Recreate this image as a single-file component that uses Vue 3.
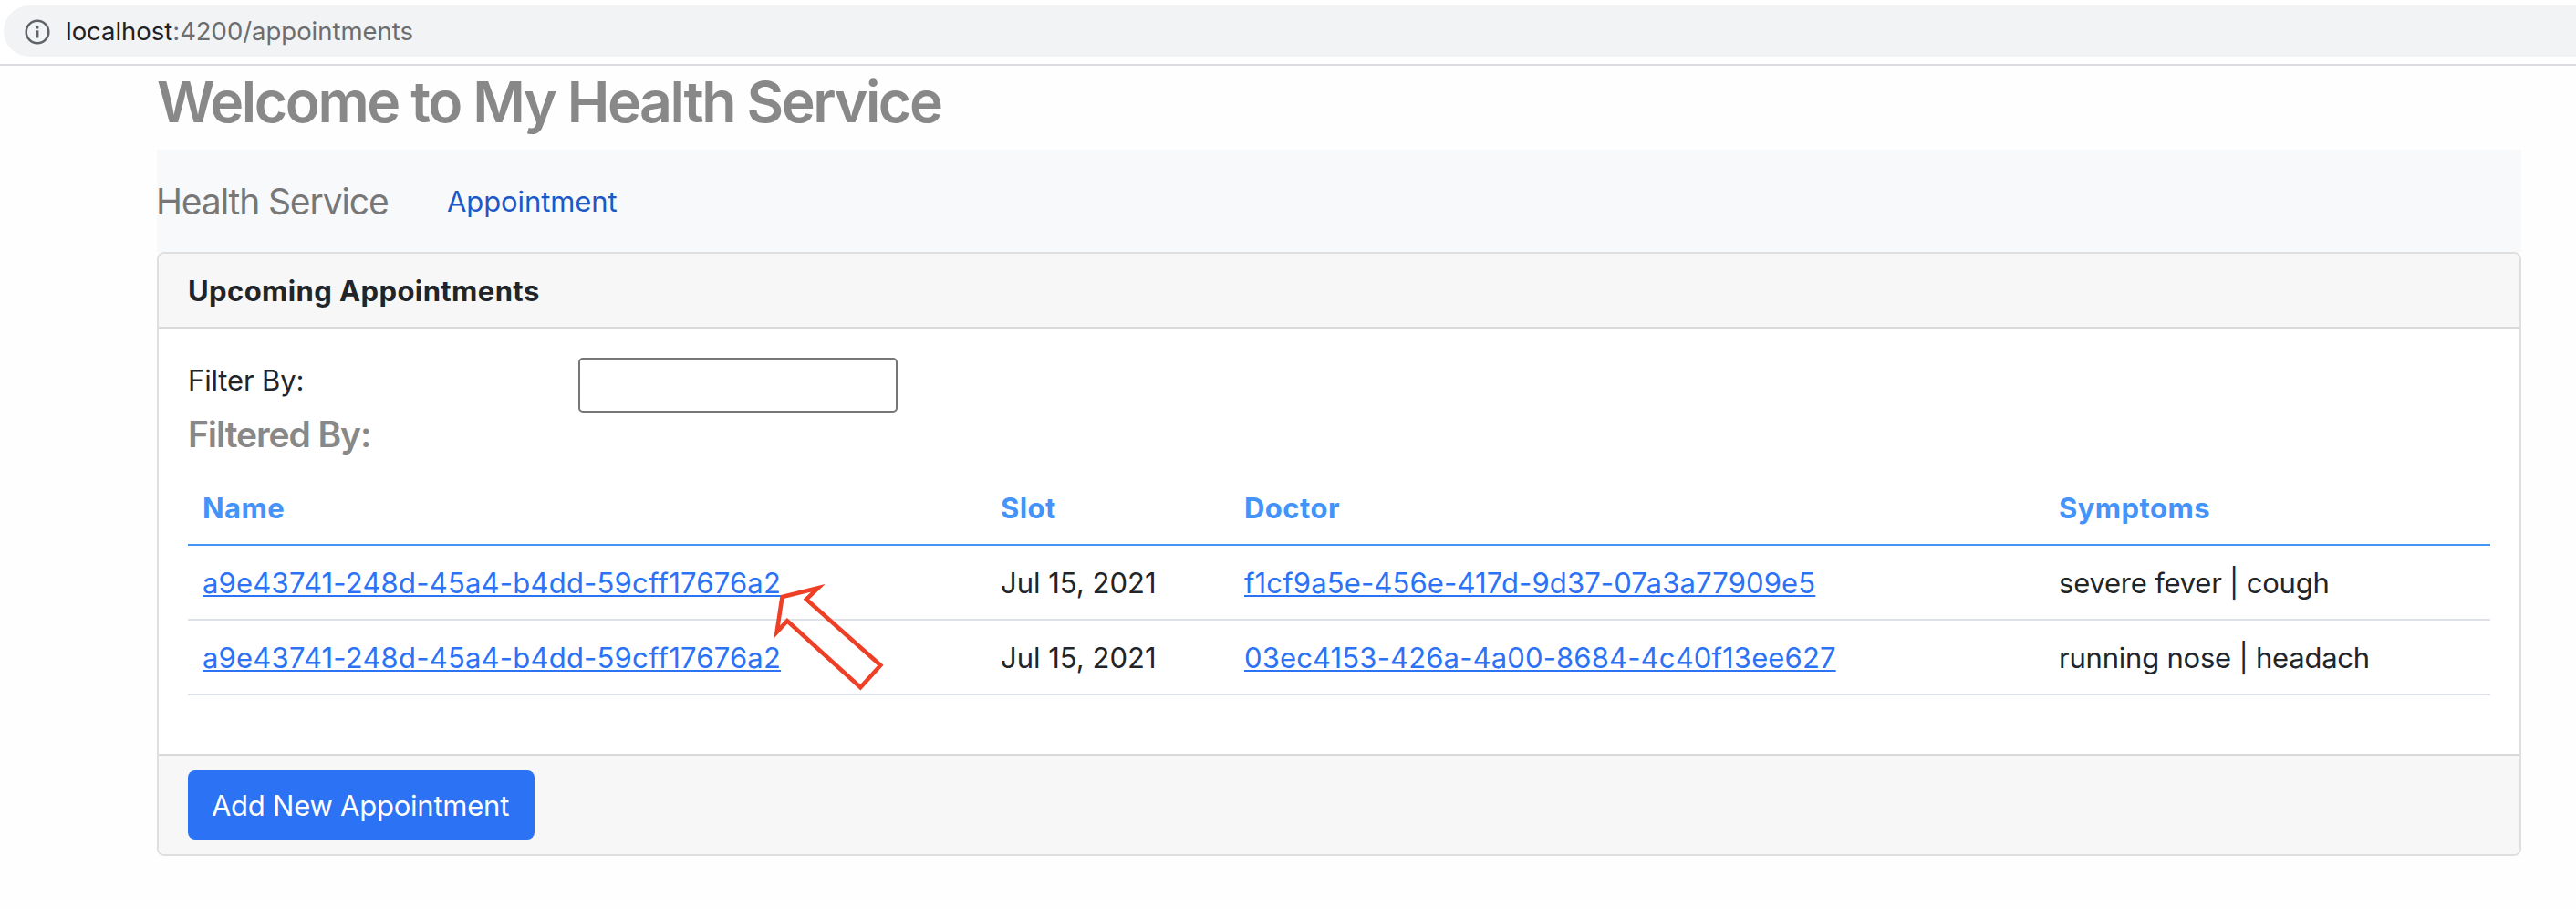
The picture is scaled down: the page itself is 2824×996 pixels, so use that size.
<script setup>
import { ref } from 'vue'

const filter = ref('')
const appointments = [
  { patient: 'a9e43741-248d-45a4-b4dd-59cff17676a2', slot: 'Jul 15, 2021', doctor: 'f1cf9a5e-456e-417d-9d37-07a3a77909e5', symptoms: 'severe fever | cough' },
  { patient: 'a9e43741-248d-45a4-b4dd-59cff17676a2', slot: 'Jul 15, 2021', doctor: '03ec4153-426a-4a00-8684-4c40f13ee627', symptoms: 'running nose | headach' }
]
</script>

<template>
  <div class="page">
    <header class="toolbar">
      <div class="address">
        <svg class="info" viewBox="0 0 28 28" width="28" height="28">
          <circle cx="14" cy="14" r="12.3" fill="none" stroke="#5f6368" stroke-width="2.5" />
          <rect x="12.4" y="7.5" width="3" height="3" fill="#5f6368" />
          <rect x="12.4" y="12.3" width="3" height="8.2" fill="#5f6368" />
        </svg>
        <span class="url"><span class="host">localhost</span>:4200/appointments</span>
      </div>
    </header>

    <main class="container">
      <h1>Welcome to My Health Service</h1>
      <nav class="navbar">
        <a class="brand">Health Service</a>
        <a class="nav-link">Appointment</a>
      </nav>

      <section class="card">
        <div class="card-header">Upcoming Appointments</div>
        <div class="card-body">
          <div class="filter-row">
            <label class="filter-label" for="filter">Filter By:</label>
            <input id="filter" v-model="filter" class="filter-input" type="text" />
          </div>
          <h4>Filtered By: {{ filter }}</h4>
          <table>
            <colgroup>
              <col class="col-name" />
              <col class="col-slot" />
              <col class="col-doctor" />
              <col />
            </colgroup>
            <thead>
              <tr>
                <th>Name</th>
                <th>Slot</th>
                <th>Doctor</th>
                <th>Symptoms</th>
              </tr>
            </thead>
            <tbody>
              <tr v-for="(a, i) in appointments" :key="i">
                <td><a class="link patient">{{ a.patient }}</a></td>
                <td>{{ a.slot }}</td>
                <td><a class="link">{{ a.doctor }}</a></td>
                <td class="symptoms">{{ a.symptoms }}</td>
              </tr>
            </tbody>
          </table>
        </div>
        <div class="card-footer">
          <button class="btn" type="button">Add New Appointment</button>
        </div>
      </section>
    </main>

    <svg class="arrow" viewBox="0 0 140 130" width="140" height="130">
      <path d="M17.5 14 L57 4.2 L44 16.7 L125.3 89 L103.3 113.2 L23 40.2 L11.6 52.6 Z" fill="none" stroke="#ee4026" stroke-width="4.6" stroke-miterlimit="10" />
    </svg>
  </div>
</template>

<style>
html, body { margin: 0; background: #fefefe; }
</style>

<style scoped>
.page {
  position: relative;
  width: 2824px;
  height: 996px;
  overflow: hidden;
  box-sizing: border-box;
  background: #fefefe;
  color: #212529;
  font-family: Inter, "Liberation Sans", sans-serif;
  font-size: 31px;
  line-height: 49px;
}
.toolbar {
  box-sizing: border-box;
  height: 72px;
  padding: 6px 0 8px 4px;
  background: #fff;
  border-bottom: 2px solid #dadce0;
}
.address {
  display: flex;
  align-items: center;
  height: 56px;
  padding-left: 22.5px;
  background: #f1f3f4;
  border-radius: 28px 0 0 28px;
}
.info { display: block; margin-top: 1px; }
.url {
  margin-left: 17.5px;
  font-size: 27.5px;
  line-height: 34px;
  letter-spacing: -0.03px;
  color: #6b6d70;
}
.host { color: #202124; }
.container { width: 2592px; margin-left: 172px; }
h1 {
  margin: 0 0 14px;
  font-size: 62.5px;
  line-height: 78px;
  font-weight: 600;
  letter-spacing: -2.4px;
  color: #888;
}
.navbar {
  display: flex;
  align-items: center;
  box-sizing: border-box;
  height: 112px;
  background: #f8f9fb;
}
.brand {
  width: 318px;
  margin-left: -1px;
  font-size: 39px;
  line-height: 59px;
  letter-spacing: -1.12px;
  color: #777;
}
.nav-link { letter-spacing: -0.1px; margin-left: 1px; color: #1c58c7; }
.card {
  box-sizing: border-box;
  height: 662px;
  border: 2px solid #dfdfdf;
  border-radius: 8px;
  background: #fff;
  overflow: hidden;
}
.card-header {
  padding: 16px 32px 15px;
  border-bottom: 2px solid #d9d9d9;
  background: #f7f7f7;
  font-weight: 700;
  letter-spacing: 0.4px;
}
.card-body { padding: 32px 32px 64px; }
.filter-row { display: flex; height: 60px; }
.filter-label { width: 428px; letter-spacing: -0.15px; }
.filter-input {
  box-sizing: border-box;
  width: 350px;
  height: 60px;
  padding: 2px 4px;
  border: 2px solid #767676;
  border-radius: 5px;
  background: #fff;
  font: inherit;
  outline: none;
}
h4 {
  margin: 0 0 16px;
  padding-bottom: 1px;
  font-size: 39px;
  line-height: 47px;
  font-weight: 600;
  letter-spacing: -1.08px;
  color: #888;
}
table {
  width: 2524px;
  table-layout: fixed;
  border-collapse: separate;
  border-spacing: 0;
}
.col-name { width: 875px; }
.col-slot { width: 267px; }
.col-doctor { width: 893px; }
th, td {
  padding: 16px 16px 15px;
  border-bottom: 2px solid #dee2e6;
  text-align: left;
  white-space: nowrap;
  letter-spacing: 0;
}
th {
  border-bottom-color: #4393f9;
  color: #4393f9;
  font-weight: 700;
  letter-spacing: 0.45px;
}
.link {
  color: #2b72f5;
  text-decoration: underline;
  text-decoration-thickness: 2px;
  text-underline-offset: 2px;
  text-decoration-skip-ink: none;
  letter-spacing: 0.14px;
}
.patient { letter-spacing: 0.21px; }
.symptoms { letter-spacing: -0.22px; }
.card-footer {
  box-sizing: border-box;
  height: 110px;
  padding: 16px 32px;
  border-top: 2px solid #d9d9d9;
  background: #f7f7f7;
}
.btn {
  display: block;
  box-sizing: border-box;
  width: 380px;
  height: 76px;
  padding: 0 2px 0 0;
  border: 0;
  border-radius: 8px;
  background: #2b72f5;
  color: #fff;
  font: inherit;
  letter-spacing: -0.23px;
}
.arrow { position: absolute; left: 840px; top: 640px; }
</style>
